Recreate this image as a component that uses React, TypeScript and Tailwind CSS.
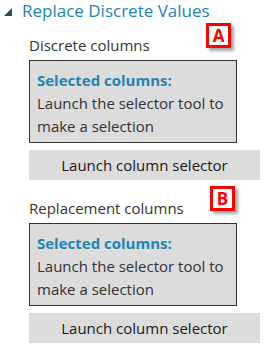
import { FC } from "react";

const font = { fontFamily: '"Open Sans", "Liberation Sans", sans-serif' };

const Badge: FC<{ letter: string; className: string }> = ({ letter, className }) => (
  <div
    className={`absolute w-[25px] h-[25px] border-[3px] border-[#ff0000] bg-white flex items-center justify-center text-[#ff0000] text-[17px] font-bold leading-none shadow-[3px_3px_3px_rgba(0,0,0,0.35)] ${className}`}
  >
    {letter}
  </div>
);

const ColumnPicker: FC<{ label: string; badge: string; badgeClass: string }> = ({
  label,
  badge,
  badgeClass,
}) => (
  <div className="relative flex flex-col items-start">
    <div className="text-[15px] leading-[20px] text-[#333]">{label}</div>
    <Badge letter={badge} className={badgeClass} />
    {/* selection summary */}
    <div className="mt-[5px] w-[208px] h-[83px] border border-[#333] bg-[#dcdcdc] px-[7px] pt-[8px]">
      <div className="text-[15px] leading-[23px] font-bold text-[#2384b5]">Selected columns:</div>
      <div className="text-[15px] leading-[23px] text-[#333]">
        Launch the selector tool to make a selection
      </div>
    </div>
    <button className="mt-[7px] w-[231px] h-[30px] bg-[#dcdcdc] text-[15px] text-[#1a1a1a]">
      Launch column selector
    </button>
  </div>
);

export default function App() {
  return (
    <div className="w-[266px] h-[348px] bg-white overflow-hidden" style={font}>
      {/* header */}
      <div className="flex items-center h-[22px] pl-[4px]">
        <svg width="8" height="8" viewBox="0 0 8 8" className="mt-[2px]">
          <polygon points="8,0 8,8 0,8" fill="#2e4a5e" />
        </svg>
        <span className="ml-[10px] text-[17px] text-[#1f84b6] leading-[20px]">
          Replace Discrete Values
        </span>
      </div>
      <div className="pl-[29px] mt-[13px]">
        <ColumnPicker label="Discrete columns" badge="A" badgeClass="left-[177px] top-[-12px]" />
        <div className="mt-[18px]">
          <ColumnPicker label="Replacement columns" badge="B" badgeClass="left-[181px] top-[-12px]" />
        </div>
      </div>
    </div>
  );
}
